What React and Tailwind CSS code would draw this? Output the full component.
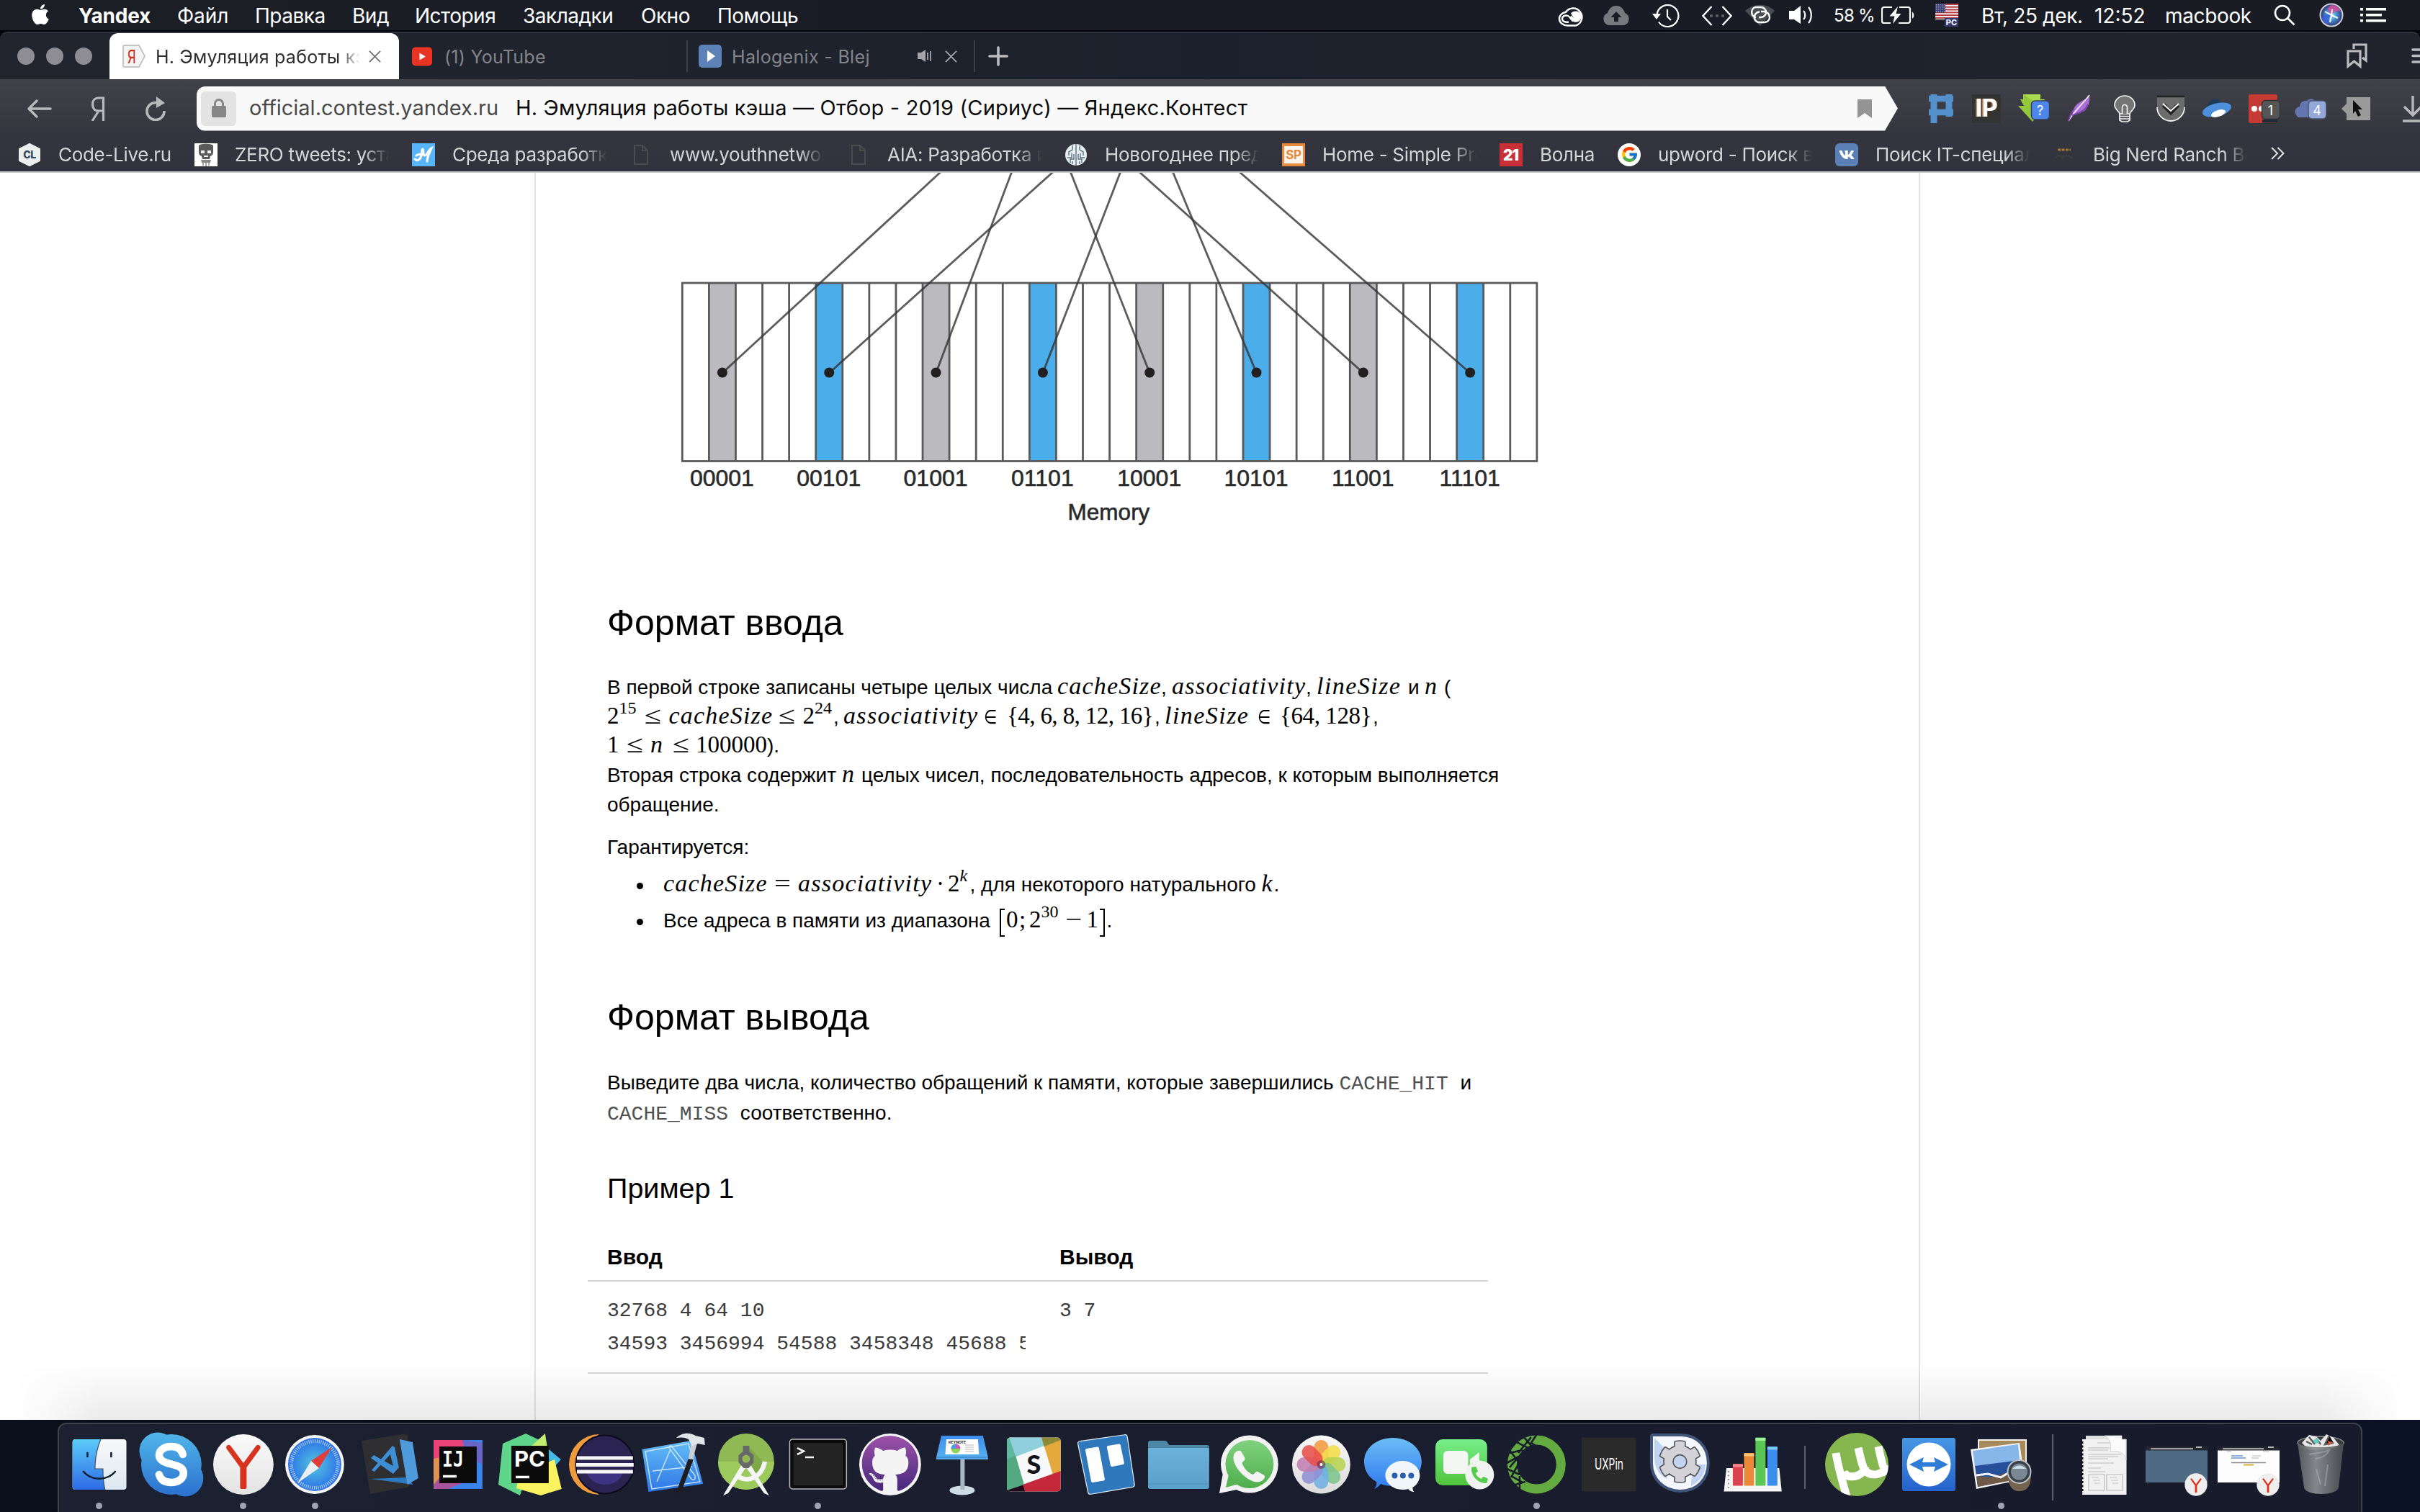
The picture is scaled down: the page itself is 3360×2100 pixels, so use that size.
import { FaApple, FaGithub, FaPhoneAlt, FaVk, FaCog } from "react-icons/fa";
import { FcGoogle } from "react-icons/fc";

/* ---------- macOS menu bar ---------- */

function MenuItem({ className, children }) {
  return <div className={"shrink-0 pt-px whitespace-nowrap " + className}>{children}</div>;
}

function Slot({ className, children }) {
  return <div className={"flex h-full shrink-0 items-center whitespace-nowrap " + (className || "")}>{children}</div>;
}

function MenuBar() {
  return (
    <div className="flex h-[44px] items-center border-b-2 border-[#03050d] bg-linear-to-r from-[#1b1e24] via-[#191c27] to-[#191c23] pl-[40px] text-[28px] leading-[44px] tracking-[-0.5px] text-white">
      <Slot className="w-[69px]">
        <FaApple className="-mt-[2px] size-[32px]" />
      </Slot>
      <MenuItem className="w-[137px] font-bold tracking-[-0.2px]">Yandex</MenuItem>
      <MenuItem className="w-[108px] tracking-[-0.1px]">Файл</MenuItem>
      <MenuItem className="w-[135px]">Правка</MenuItem>
      <MenuItem className="w-[87px]">Вид</MenuItem>
      <MenuItem className="w-[150px]">История</MenuItem>
      <MenuItem className="w-[164px]">Закладки</MenuItem>
      <MenuItem className="w-[106px]">Окно</MenuItem>
      <MenuItem className="w-[1167px]">Помощь</MenuItem>
      <Slot className="w-[61px] pt-[3px]">
        <svg viewBox="0 0 38 28" className="h-[28px] w-[38px]" fill="none" stroke="white" strokeWidth="2.400">
          <path d="M13.500 26.500a12 9.500 0 0 1-2.500-18.700A12.300 12.300 0 1 1 25 26.500Z" />
          <path d="M25 6.500a7.600 7.600 0 0 1 0 15.300c-4 0-6-3-8.500-6.300l2-3 4 4-4.500-6.800c1.500-2 4-3.200 7-3.200Z" fill="white" stroke="none" />
          <path d="M15 21.500c-5 1-9-1-9-4.500s4-5.500 8-4c2.500 1 4 5 7 7.500" />
        </svg>
      </Slot>
      <Slot className="w-[70px] pt-px">
        <svg viewBox="0 0 40 28" className="h-[28px] w-[40px]">
          <path d="M9 27a9 9 0 0 1-1-17C10 4 14 0 20 0s10 4 12 10a9 9 0 0 1-1 17Z" fill="#77797f" />
          <path d="m20 8 7.500 8H23v6h-6v-6h-4.500Z" fill="#191c24" />
        </svg>
      </Slot>
      <Slot className="w-[69px] pt-px">
        <svg viewBox="0 0 38 32" className="h-[32px] w-[38px]" fill="none" stroke="white" strokeWidth="2.200">
          <path d="M6.500 14A15 15 0 1 1 9 24.500" />
          <path d="M21 7v10l5 5" />
          <path d="M0 13h12l-6 8Z" fill="white" stroke="none" />
        </svg>
      </Slot>
      <Slot className="w-[60px] pt-px">
        <svg viewBox="0 0 42 28" className="h-[28px] w-[42px]" fill="none" stroke="white" strokeWidth="2.400">
          <path d="M13.500 1 1.500 14l12 13M28.500 1l12 13-12 13" />
          <g fill="#595b62" stroke="none">
            <circle cx="13" cy="14" r="2.200" />
            <circle cx="21" cy="14" r="2.200" />
            <circle cx="29" cy="14" r="2.200" />
          </g>
        </svg>
      </Slot>
      <Slot className="w-[61px]">
        <svg viewBox="0 0 42 30" className="h-[30px] w-[42px]" fill="none" stroke="white" strokeWidth="2.400">
          <path d="M0 9C12-2 30-2 41 9L20.500 30Z" fill="#4a4c53" stroke="none" />
          <path d="M15 18h-1a7.500 7.500 0 0 1 0-14h8a7 7 0 0 1 0 14h-3" />
          <path d="M22 10h4a8 8 0 0 1 8 8 7 7 0 0 1-7 7h-8a7 7 0 0 1-5-11c1-2 3-3 6-4" />
        </svg>
      </Slot>
      <Slot className="w-[62px]">
        <svg viewBox="0 0 34 26" className="h-[26px] w-[34px]" fill="none" stroke="white" strokeWidth="2.200">
          <path d="M0 7h7L16 0v25L7 19H0Z" fill="white" stroke="none" />
          <path d="M20 7c3 3 3 9 0 12M27 2c5 6 5 16 0 22" />
        </svg>
      </Slot>
      <MenuItem className="w-[66px] text-[24px] tracking-[-0.700px]">58 %</MenuItem>
      <Slot className="w-[75px]">
        <svg viewBox="0 0 46 26" className="h-[26px] w-[46px]" fill="none" stroke="white" strokeWidth="2.200">
          <path d="M15 2H4a3 3 0 0 0-3 3v16a3 3 0 0 0 3 3h9M25 2h12a3 3 0 0 1 3 3v16a3 3 0 0 1-3 3H24" />
          <path d="M23 1 11.500 14.500h7L16 25l11.500-14h-7Z" fill="white" stroke="none" />
          <path d="M43 8.500c3 1.500 3 8 0 9Z" fill="white" stroke="none" />
        </svg>
      </Slot>
      <Slot className="w-[64px]">
        <div className="relative h-[32px] w-[32px]">
          <svg viewBox="0 0 32 22" className="h-[22px] w-[32px]">
            <rect width="32" height="22" fill="#f3f3f5" />
            {[0, 1, 2, 3, 4, 5].map((i) => (
              <rect key={i} y={i * 3.8} width="32" height="1.900" fill="#b3363d" />
            ))}
            <rect width="14" height="12.500" fill="#3b3f78" />
            {[0, 1, 2, 3].map((r) =>
              [0, 1, 2, 3, 4].map((c) => <circle key={r + "-" + c} cx={1.5 + c * 2.7} cy={1.8 + r * 3} r="0.600" fill="#fff" />)
            )}
          </svg>
          <div className="absolute right-0 bottom-0 h-[12px] w-[19px] bg-[#363a72] text-center text-[11px] leading-[12px] font-bold tracking-normal">PC</div>
        </div>
      </Slot>
      <MenuItem className="w-[157px] tracking-[-0.350px]">Вт, 25 дек.</MenuItem>
      <MenuItem className="w-[98px] tracking-normal">12:52</MenuItem>
      <MenuItem className="w-[151px] tracking-[-0.350px]">macbook</MenuItem>
      <Slot className="w-[63px]">
        <svg viewBox="0 0 30 30" className="h-[30px] w-[30px]" fill="none" stroke="white" strokeWidth="2.600">
          <circle cx="12" cy="12" r="10" />
          <path d="m19 19 9.500 9.500" />
        </svg>
      </Slot>
      <Slot className="w-[57px]">
        <svg viewBox="0 0 34 34" className="size-[34px]">
          <defs>
            <radialGradient id="siri">
              <stop offset="0" stopColor="#dff6ff" />
              <stop offset="0.350" stopColor="#4aa7e0" />
              <stop offset="1" stopColor="#31306f" />
            </radialGradient>
          </defs>
          <circle cx="17" cy="17" r="15.500" fill="url(#siri)" stroke="#cfd0da" strokeWidth="2" />
          <path d="M17 17C10 10 11 4 19 3c6 1 10 6 11 9-6-2-10 1-13 5Z" fill="#d94f9c" opacity="0.850" />
          <path d="M17 17C9 15 5 18 4 22c2 5 6 7 9 8-1-5 0-9 4-13Z" fill="#3b62d8" opacity="0.900" />
          <path d="m17 17 9 4M17 17l-9-5M17 17l1-8M17 17l-2 10" stroke="white" strokeWidth="2" />
        </svg>
      </Slot>
      <Slot>
        <svg viewBox="0 0 36 20" className="h-[20px] w-[36px]" fill="white">
          <path d="M0 0h4v3.500H0ZM8 0h28v3.500H8ZM0 8h4v3.500H0ZM8 8h22v3.500H8ZM0 16h4v3.500H0ZM8 16h28v3.500H8Z" />
        </svg>
      </Slot>
    </div>
  );
}

/* ---------- browser chrome ---------- */

function Cross({ className }) {
  return (
    <svg viewBox="0 0 18 18" className={"size-[17px] shrink-0 " + className} fill="none" stroke="currentColor" strokeWidth="1.900">
      <path d="m1 1 16 16M17 1 1 17" />
    </svg>
  );
}

function TabBar() {
  return (
    <div className="flex h-[66px] items-center rounded-t-[10px] border-t-2 border-[#30333d] bg-linear-to-r from-[#22252e] via-[#1b212c] to-[#22242d] text-[25px] leading-[62px] tracking-[0.250px]">
      <div className="flex w-[152px] shrink-0 gap-[16px] pl-[24px]">
        <span className="size-[24px] rounded-full bg-[#8f8d94]" />
        <span className="size-[24px] rounded-full bg-[#8f8d94]" />
        <span className="size-[24px] rounded-full bg-[#8f8d94]" />
      </div>
      <div className="flex h-full w-[402px] shrink-0 items-center rounded-t-[12px] bg-white pl-[18px]">
        <svg viewBox="0 0 32 32" className="size-[32px] shrink-0">
          <path d="M3 1h20l8 15-8 15H3a2 2 0 0 1-2-2V3a2 2 0 0 1 2-2Z" fill="#f4f4f4" stroke="#c4c4c4" strokeWidth="2" />
          <text x="13" y="25.500" fontSize="26" textAnchor="middle" fill="#cf2a1f" textLength="12" lengthAdjust="spacingAndGlyphs" fontFamily="Inter">Я</text>
        </svg>
        <div className="ml-[14px] w-[290px] overflow-hidden pt-px whitespace-nowrap text-[#2d2d30] [mask-image:linear-gradient(to_right,black_88%,transparent_98%)]">Н. Эмуляция работы кэша</div>
        <Cross className="ml-[6px] text-[#6f6f6f]" />
      </div>
      <div className="flex h-full w-[399px] shrink-0 items-center pl-[18px] text-[#84858b]">
        <svg viewBox="0 0 28 26" className="h-[27px] w-[28px] shrink-0">
          <rect width="28" height="26" rx="5" fill="#e93323" />
          <path d="m10.500 8 8.500 5-8.500 5Z" fill="white" />
        </svg>
        <span className="ml-[17px] pt-px">(1) YouTube</span>
      </div>
      <div className="h-[44px] w-[2px] shrink-0 bg-[#3c3f47]" />
      <div className="flex h-full w-[397px] shrink-0 items-center pl-[15px] text-[#84858b]">
        <svg viewBox="0 0 32 32" className="size-[32px] shrink-0">
          <rect width="32" height="32" rx="5" fill="#5d82b7" />
          <path d="m12 8 11 8-11 8Z" fill="white" />
        </svg>
        <span className="ml-[14px] w-[258px] pt-px tracking-[0.320px]">Halogenix - Blej</span>
        <svg viewBox="0 0 20 18" className="h-[18px] w-[20px] shrink-0" fill="none" stroke="#a5a5a9" strokeWidth="1.800">
          <path d="M0 4h5l6-4v17l-6-4H0Z" fill="#a5a5a9" stroke="none" />
          <path d="M14 4v10M18 2v14" />
        </svg>
        <Cross className="ml-[18px] text-[#a9a9ad]" />
      </div>
      <div className="h-[44px] w-[2px] shrink-0 bg-[#3c3f47]" />
      <svg viewBox="0 0 28 28" className="ml-[18px] size-[28px] shrink-0" stroke="#bcbcc0" strokeWidth="3.600" strokeLinecap="round">
        <path d="M2 14h24M14 2v24" />
      </svg>
      <div className="grow" />
      <svg viewBox="0 0 30 36" className="h-[36px] w-[30px] shrink-0" fill="none" stroke="#bcbcc0" strokeWidth="3.200">
        <path d="M2 11h17v21l-8.500-7L2 32Z" />
        <path d="M10 8V2h17v22l-5-4" />
      </svg>
      <svg viewBox="0 0 12 22" className="ml-[60px] h-[22px] w-[12px] shrink-0" stroke="#bcbcc0" strokeWidth="3.600" strokeLinecap="round">
        <path d="M2 2h12M2 10.500h12M2 19h12" />
      </svg>
    </div>
  );
}

function Toolbar() {
  return (
    <div className="flex h-[81px] items-center pl-[38px] text-[#b9b9bd]">
      <Slot className="w-[88px]">
        <svg viewBox="0 0 34 26" className="h-[26px] w-[34px]" fill="none" stroke="currentColor" strokeWidth="3.400" strokeLinecap="round" strokeLinejoin="round">
          <path d="M32 13H3M13 2 2 13l11 11" />
        </svg>
      </Slot>
      <Slot className="w-[74px]">
        <svg viewBox="0 0 20 34" className="h-[34px] w-[20px]" fill="none" stroke="currentColor" strokeWidth="3.200">
          <path d="M17.500 34V2H11C5.500 2 2.500 6 2.500 11s3 9 8.500 9h6.500M11 20 2 34" />
        </svg>
      </Slot>
      <Slot className="w-[73px]">
        <svg viewBox="0 0 32 34" className="h-[34px] w-[32px]" fill="none" stroke="currentColor" strokeWidth="3.600">
          <path d="M18 8.500h-2A12 12 0 1 0 28 20" />
          <path d="m17 0 12 9-12 7Z" fill="currentColor" stroke="none" />
        </svg>
      </Slot>
      <div className="flex h-[62px] w-[2362px] shrink-0 items-center rounded-l-[12px] bg-[#f9f9f9] pl-[6px] [clip-path:polygon(0_0,calc(100%-18px)_0,100%_50%,calc(100%-18px)_100%,0_100%)]">
        <div className="flex h-[48px] w-[49px] shrink-0 items-center justify-center rounded-[6px] bg-[#e3e3e3]">
          <svg viewBox="0 0 20 27" className="h-[27px] w-[20px]">
            <rect y="10" width="20" height="16" rx="2" fill="#868686" />
            <path d="M4.500 11V7a5.500 5.500 0 0 1 11 0v4" fill="none" stroke="#868686" strokeWidth="3" />
          </svg>
        </div>
        <span className="ml-[18px] w-[370px] shrink-0 pb-[2px] text-[29px] text-[#494949]">official.contest.yandex.ru</span>
        <span className="grow pb-[2px] text-[29px] tracking-[0.180px] whitespace-nowrap text-[#0b0b0b]">Н. Эмуляция работы кэша — Отбор - 2019 (Сириус) — Яндекс.Контест</span>
        <svg viewBox="0 0 20 26" className="mr-[36px] h-[26px] w-[20px]">
          <path d="M0 0h20v26l-10-7-10 7Z" fill="#949494" />
        </svg>
      </div>
      <Slot className="ml-[43px] w-[60px]">
        <svg viewBox="0 0 34 40" className="h-[40px] w-[34px]" fill="none" stroke="#5390cc">
          <path d="M7 0v40M28 0v31" strokeWidth="9" />
          <path d="M0 6h34M0 25h34" strokeWidth="8.500" />
        </svg>
      </Slot>
      <Slot className="w-[64px]">
        <div className="flex size-[40px] items-center justify-center bg-[#333333] pb-px font-['Inter'] text-[34px] leading-none font-bold tracking-tight text-white [text-shadow:-2px_0_#d18a4a]">IP</div>
      </Slot>
      <Slot className="w-[69px]">
        <svg viewBox="0 0 44 40" className="h-[40px] w-[44px]">
          <path d="M7 0h24v7h6l-5 9h6L20 38 0 16h8L3 7h4Z" fill="#93c83d" />
          <path d="M7 0h24v7h6l-3 4-13-2Z" fill="#a9d94f" />
          <rect x="18.500" y="9" width="25" height="26" rx="5" fill="#4f86ec" stroke="#33415f" strokeWidth="1.500" />
          <text x="30.500" y="29" fontSize="18" textAnchor="middle" fill="white" fontFamily="Inter">?</text>
        </svg>
      </Slot>
      <Slot className="w-[64px]">
        <svg viewBox="0 0 32 40" className="h-[40px] w-[32px]">
          <path d="M30 1c1 8-1 17-7 22-6 4-12 4-17 6 1-6 2-12 9-17C20 8 27 7 30 1Z" fill="#a96fd2" />
          <path d="M30 1C22 12 10 22 1 37" fill="none" stroke="#efe4f8" strokeWidth="1.800" />
          <path d="M6 29c8-3 17-4 22-15M9 20c-4 5-6 9-8 17" fill="none" stroke="#7c3fb3" strokeWidth="2" />
        </svg>
      </Slot>
      <Slot className="w-[59px]">
        <svg viewBox="0 0 30 38" className="h-[38px] w-[30px]" fill="#757575" stroke="#f2f2f2" strokeWidth="1.700">
          <path d="M8 26h14v9l-3 2h-8l-3-2Z" fill="#4a4a4d" />
          <path d="M8 26c0-3-7-6-7-12a14 13 0 0 1 28 0c0 6-7 9-7 12Z" />
          <path d="M11.500 26V17a3.500 3.500 0 0 1 7 0v9M8 29.500h14M8 33h14" />
        </svg>
      </Slot>
      <Slot className="w-[64px]">
        <svg viewBox="0 0 40 38" className="h-[38px] w-[40px]">
          <path d="M1 1h38v16a19 19 0 0 1-38 0Z" fill="#6c6c6c" />
          <path d="M1 17a19 19 0 0 0 38 0" fill="none" stroke="#f0f0f0" strokeWidth="1.800" />
          <path d="M1 2h38" stroke="#222226" strokeWidth="2.500" />
          <path d="m10 14 10 10 10-10" fill="none" stroke="#232323" strokeWidth="6" />
          <path d="m9 12 11 10 11-10" fill="none" stroke="#ffffff" strokeWidth="2" />
        </svg>
      </Slot>
      <Slot className="w-[64px]">
        <svg viewBox="0 0 40 34" className="h-[34px] w-[40px]">
          <path d="M7 13C10 3 18 1 24 6l5 6-14 6Z" fill="#213a58" />
          <ellipse cx="20" cy="18.500" rx="20.500" ry="9" transform="rotate(-14 20 18.500)" fill="#4c8fdd" />
          <ellipse cx="22" cy="23.500" rx="10.500" ry="4.500" transform="rotate(-18 22 23.500)" fill="white" />
        </svg>
      </Slot>
      <Slot className="w-[64px]">
        <svg viewBox="0 0 44 40" className="h-[40px] w-[44px]">
          <rect width="40" height="40" rx="3" fill="#c33b32" />
          <circle cx="8" cy="20" r="4" fill="white" />
          <circle cx="18" cy="20" r="4" fill="white" />
          <rect x="19" y="35" width="21" height="4.500" fill="#1e2c38" />
          <rect x="18.500" y="8.500" width="25" height="26" rx="5" fill="#555555" stroke="#33333a" strokeWidth="1.500" />
          <text x="30.500" y="29" fontSize="18" textAnchor="middle" fill="white" fontFamily="Inter">1</text>
        </svg>
      </Slot>
      <Slot className="w-[65px]">
        <svg viewBox="0 0 44 40" className="h-[40px] w-[44px]">
          <path d="M5 32C-2 27 0 18 7 17c0-5 5-9 10-8 3-3 8-3 10-1v24Z" fill="#6377ae" />
          <rect x="19" y="9" width="25" height="25" rx="5" fill="#93a8d8" stroke="#4b5470" strokeWidth="1.500" />
          <text x="31" y="29" fontSize="18" textAnchor="middle" fill="white" fontFamily="Inter">4</text>
        </svg>
      </Slot>
      <Slot className="w-[85px]">
        <svg viewBox="0 0 40 32" className="h-[32px] w-[40px]">
          <path d="M7 0h33v32H7v-9l-7-7 7-7Z" fill="#9a9a9a" />
          <path d="m16 4 13 13h-6l4 8-4 2-4-8-3 4Z" fill="#111111" />
        </svg>
      </Slot>
      <Slot>
        <svg viewBox="0 0 24 38" className="h-[38px] w-[24px]" fill="none" stroke="currentColor" strokeWidth="3.400">
          <path d="M14 1v27M2 16l12 12 12-12M0 36h26" />
        </svg>
      </Slot>
    </div>
  );
}

function DocGlyph() {
  return (
    <svg viewBox="0 0 32 32" className="size-[32px]" fill="none" stroke="#4c4c4f" strokeWidth="2">
      <path d="M7 3h11l7 7v19H7ZM18 3v7h7" />
    </svg>
  );
}

const bookmarks = [
  {
    w: "w-[245px]",
    t: "Code-Live.ru",
    icon: (
      <svg viewBox="0 0 32 32" className="size-[32px]">
        <path d="m16 1 14 7v16l-14 7L2 24V8Z" fill="#eceef0" stroke="#eceef0" strokeWidth="2" strokeLinejoin="round" />
        <text x="16" y="21" fontSize="14" fontWeight="800" textAnchor="middle" fill="#2f4a5c" fontFamily="Inter">CL</text>
      </svg>
    ),
  },
  {
    w: "w-[302px]",
    t: "ZERO tweets: устано",
    icon: (
      <svg viewBox="0 0 32 32" className="size-[32px]">
        <rect width="32" height="32" fill="white" />
        <path d="M6 8V3c3-3 17-3 20 0v9c0 4-2 5-4 6l-1 4H11l-1-4c-2-1-4-2-4-6Z" fill="#5a5a5a" />
        <path d="M9 10h5v4H9ZM18 10h5v4h-5ZM13 17h6v2h-6Z" fill="#f2f2f2" />
        <path d="M9 23h14l-1 4H10Z" fill="#888" />
        <path d="M12 27v4M16 27v5M20 27v4" stroke="#888" strokeWidth="1.500" />
      </svg>
    ),
  },
  {
    w: "w-[302px]",
    t: "Среда разработки",
    icon: (
      <svg viewBox="0 0 32 32" className="size-[32px]">
        <rect width="32" height="32" fill="#58b4fb" />
        <path d="M4 22c4 4 8 0 9-6s1-8 2-8 0 9 3 9 5-8 9-10c-2 5-6 12-6 18M6 17c3-2 6-2 8-1" fill="none" stroke="white" strokeWidth="3.200" strokeLinecap="round" />
      </svg>
    ),
  },
  { w: "w-[302px]", t: "www.youthnetwork.", icon: <DocGlyph /> },
  { w: "w-[302px]", t: "AIA: Разработка и", icon: <DocGlyph /> },
  {
    w: "w-[302px]",
    t: "Новогоднее предл",
    icon: (
      <svg viewBox="0 0 32 32" className="size-[32px]">
        <circle cx="16" cy="16" r="15" fill="#e8edf1" />
        <path d="M16 1v30M11 3v6l-5 3v5M4 20h6v-6M8 27v-5h5v-7M21 3v6l5 3v5M28 20h-6v-6M24 27v-5h-5v-7M11 25v4M21 25v4" fill="none" stroke="#5a7187" strokeWidth="1.400" />
      </svg>
    ),
  },
  {
    w: "w-[302px]",
    t: "Home - Simple Pro",
    icon: (
      <svg viewBox="0 0 32 32" className="size-[32px]">
        <rect width="32" height="32" fill="#e6883d" />
        <rect x="3" y="4" width="26" height="24" fill="#fbf5ee" />
        <text x="16" y="22" fontSize="17" fontWeight="700" textAnchor="middle" fill="#e6883d" fontFamily="Inter">SP</text>
      </svg>
    ),
  },
  {
    w: "w-[164px]",
    t: "Волна",
    icon: (
      <svg viewBox="0 0 32 32" className="size-[32px]">
        <rect width="32" height="32" fill="#c92f37" />
        <text x="15.500" y="23.500" fontSize="21" fontWeight="900" textAnchor="middle" fill="white" fontFamily="Inter" letterSpacing="-1">21</text>
      </svg>
    ),
  },
  {
    w: "w-[302px]",
    t: "upword - Поиск в G",
    icon: (
      <div className="flex size-[32px] items-center justify-center rounded-full bg-white">
        <FcGoogle className="size-[25px]" />
      </div>
    ),
  },
  {
    w: "w-[302px]",
    t: "Поиск IT-специал",
    icon: (
      <div className="flex size-[32px] items-center justify-center rounded-[6px] bg-[#5b80b5]">
        <FaVk className="size-[22px] text-white" />
      </div>
    ),
  },
  {
    w: "w-[303px]",
    t: "Big Nerd Ranch Bo",
    icon: (
      <svg viewBox="0 0 32 32" className="size-[32px]">
        <path d="M7 9h18" stroke="#a9792f" strokeWidth="3" strokeDasharray="4 1.500" />
        <path d="M4 21c2-5 8-5 9 0 2-5 9-5 15 0" fill="none" stroke="#3f3e3c" strokeWidth="2" />
      </svg>
    ),
  },
];

function BookmarksBar() {
  return (
    <div className="flex h-[47px] items-center pl-[25px] text-[26px] leading-[47px] tracking-[-0.300px] text-[#d5d5d8]">
      {bookmarks.map((b) => (
        <div key={b.t} className={"flex shrink-0 items-center " + b.w}>
          <div className="w-[56px] shrink-0">{b.icon}</div>
          <div className="w-[214px] overflow-hidden whitespace-nowrap [mask-image:linear-gradient(to_right,black_84%,transparent_100%)]">{b.t}</div>
        </div>
      ))}
      <svg viewBox="0 0 19 18" className="h-[18px] w-[19px] shrink-0 -translate-y-[2px]" fill="none" stroke="#e2e2e4" strokeWidth="2">
        <path d="m1 1 8 8-8 8M9.500 1l8 8-8 8" />
      </svg>
    </div>
  );
}

/* ---------- article ---------- */

const dots = [
  { label: "00001", top: 1307 },
  { label: "00101", top: 1463 },
  { label: "01001", top: 1405 },
  { label: "01101", top: 1556 },
  { label: "10001", top: 1486 },
  { label: "10101", top: 1628 },
  { label: "11001", top: 1581 },
  { label: "11101", top: 1720 },
];

function MemoryDiagram() {
  const left = 947.3;
  const cell = 37.08;
  const y0 = 153;
  const y1 = 400.5;
  return (
    <svg viewBox="843 0 1400 502" className="h-[502px] w-[1400px]" fontFamily="Liberation Sans" fill="#2a2a2a">
      {dots.map((d, i) => (
        <rect key={d.label} x={left + cell * (1 + i * 4)} y={y0} width={cell} height={y1 - y0} fill={i % 2 ? "#4bade9" : "#bbbbbf"} />
      ))}
      <g stroke="#5a5a5a" strokeWidth="2.800" fill="none">
        <rect x={left} y={y0} width={cell * 32} height={y1 - y0} />
        {Array.from({ length: 31 }, (_, i) => (
          <path key={i} d={`M${left + cell * (i + 1)} ${y0}V${y1}`} />
        ))}
      </g>
      {dots.map((d, i) => {
        const cx = left + cell * (1.5 + i * 4);
        return (
          <g key={d.label}>
            <path d={`M${d.top} -2 ${cx} 278`} stroke="#333333" strokeOpacity="0.800" strokeWidth="2.800" />
            <circle cx={cx} cy="277.500" r="7" fill="#221f20" />
            <text x={cx - 0.5} y="435" fontSize="32" textAnchor="middle" stroke="#2a2a2a" strokeWidth="0.600">{d.label}</text>
          </g>
        );
      })}
      <text x="1539.500" y="481.500" fontSize="31.500" textAnchor="middle" stroke="#2a2a2a" strokeWidth="0.600">Memory</text>
    </svg>
  );
}

function M({ className, children }) {
  return <span className={"shrink-0 font-['Liberation_Serif'] leading-none whitespace-nowrap " + (className || "")}>{children}</span>;
}

function Var({ className, children }) {
  return <M className={"text-[34px] italic " + (className || "")}>{children}</M>;
}

function Num({ className, children }) {
  return <M className={"text-[33px] " + (className || "")}>{children}</M>;
}

function Le({ className }) {
  return (
    <M className={"text-[34px] " + className}>
      <span className="inline-block origin-left scale-x-125">≤</span>
    </M>
  );
}

function In({ className }) {
  return (
    <span className={"shrink-0 font-['DejaVu_Sans'] text-[28px] leading-none " + className}>
      <span className="inline-block origin-bottom-left scale-x-75 scale-y-95">∈</span>
    </span>
  );
}

function Sup({ className, children }) {
  return <span className={"relative -top-[14px] shrink-0 font-['Liberation_Serif'] text-[24px] leading-none whitespace-nowrap " + (className || "")}>{children}</span>;
}

function Line({ className, children }) {
  return <div className={"flex h-[40.700px] items-baseline whitespace-nowrap " + (className || "")}>{children}</div>;
}

function Bullet() {
  return (
    <span className="w-[78px] pl-[41px]">
      <span className="inline-block size-[9px] -translate-y-[3px] rounded-full bg-black" />
    </span>
  );
}

function InputFormat() {
  return (
    <div className="text-[28px] leading-[40.700px]">
      <Line>
        <span className="w-[625px]">В первой строке записаны четыре целых числа</span>
        <Var className="w-[144px] tracking-[1.200px]">cacheSize</Var>
        <span className="w-[15px]">,</span>
        <Var className="w-[186px] tracking-[1.250px]">associativity</Var>
        <span className="w-[15px]">,</span>
        <Var className="w-[127px] tracking-[1.450px]">lineSize</Var>
        <span className="w-[23px]">и</span>
        <Var className="w-[27px]">n</Var>
        <span>(</span>
      </Line>
      <Line>
        <Num>2</Num>
        <Sup className="w-[35px]">15</Sup>
        <Le className="w-[34px]" />
        <Var className="w-[152px] tracking-[1.200px]">cacheSize</Var>
        <Le className="w-[34px]" />
        <Num>2</Num>
        <Sup className="w-[26px]">24</Sup>
        <span className="w-[14px]">,</span>
        <Var className="w-[195px] tracking-[1.350px]">associativity</Var>
        <In className="w-[32px]" />
        <Num className="w-[205px] tracking-[-0.600px]">{"{4, 6, 8, 12, 16}"}</Num>
        <span className="w-[14px]">,</span>
        <Var className="w-[129px] tracking-[1.450px]">lineSize</Var>
        <In className="w-[31px]" />
        <Num className="w-[129px] tracking-[-0.400px]">{"{64, 128}"}</Num>
        <span>,</span>
      </Line>
      <Line>
        <Num className="w-[27px]">1</Num>
        <Le className="w-[33px]" />
        <Var className="w-[31px]">n</Var>
        <Le className="w-[32px]" />
        <Num>100000</Num>
        <span>).</span>
      </Line>
      <Line>
        <span className="w-[326px]">Вторая строка содержит</span>
        <Var className="w-[27px]">n</Var>
        <span>целых чисел, последовательность адресов, к которым выполняется</span>
      </Line>
      <Line>обращение.</Line>
      <Line className="mt-[19px]">Гарантируется:</Line>
      <Line className="mt-[11px]">
        <Bullet />
        <Var className="w-[154px] tracking-[1.200px]">cacheSize</Var>
        <M className="w-[33px] text-[34px]">
          <span className="inline-block origin-left scale-x-120">=</span>
        </M>
        <Var className="w-[192px] tracking-[1.250px]">associativity</Var>
        <Num className="w-[16px]">·</Num>
        <Num>2</Num>
        <Sup className="w-[14px] italic">k</Sup>
        <span className="w-[405px]">, для некоторого натурального</span>
        <Var className="w-[17px]">k</Var>
        <span>.</span>
      </Line>
      <Line className="mt-[9px]">
        <Bullet />
        <span className="w-[467px]">Все адреса в памяти из диапазона</span>
        <span className="h-[39px] w-[7px] translate-y-[3px] self-start border-2 border-r-0 border-black" />
        <Num className="ml-[2px] w-[18px]">0</Num>
        <Num className="w-[14px]">;</Num>
        <Num>2</Num>
        <Sup className="w-[33px]">30</Sup>
        <M className="w-[30px] text-[34px]">
          <span className="inline-block origin-left scale-x-120">−</span>
        </M>
        <Num className="w-[18px]">1</Num>
        <span className="h-[39px] w-[7px] translate-y-[3px] self-start border-2 border-l-0 border-black" />
        <span className="ml-[3px]">.</span>
      </Line>
    </div>
  );
}

function Article() {
  return (
    <main className="h-[1734px] overflow-hidden border-t-2 border-[#c9c9cd] bg-white font-['Liberation_Sans'] text-black">
      <div className="ml-[742px] h-full w-[1924px] border-x-2 border-[#e3e3e3] pl-[99px]">
        <MemoryDiagram />
        <h2 className="mt-[93px] text-[50px] leading-[60px]">Формат ввода</h2>
        <div className="mt-[40px]">
          <InputFormat />
        </div>
        <h2 className="mt-[83px] text-[50px] leading-[60px]">Формат вывода</h2>
        <p className="mt-[40px] w-[1240px] text-[28px] leading-[42px]">
          Выведите два числа, количество обращений к памяти, которые завершились{" "}
          <span className="mr-[9px] font-['Liberation_Mono'] leading-none text-[#505050]">CACHE_HIT</span> и<br />
          <span className="mr-[9px] font-['Liberation_Mono'] leading-none text-[#505050]">CACHE_MISS</span> соответственно.
        </p>
        <h3 className="mt-[58px] text-[39.500px] leading-[50px]">Пример 1</h3>
        <div className="mt-[51px] -ml-[27px] w-[1250px]">
          <div className="flex border-b-2 border-[#d6d6d6] pb-[12px] pl-[27px] text-[30px] leading-[40px] font-bold">
            <div className="w-[628px]">Ввод</div>
            <div>Вывод</div>
          </div>
          <div className="flex border-b-2 border-[#d6d6d6] pt-[18px] pb-[16px] pl-[27px] font-['Liberation_Mono'] text-[28px] leading-[46px] text-[#3a3a3a]">
            <div className="mr-[47px] w-[581px] overflow-hidden whitespace-nowrap">
              <div>32768 4 64 10</div>
              <div>34593 3456994 54588 3458348 45688 58</div>
            </div>
            <div>3 7</div>
          </div>
        </div>
      </div>
    </main>
  );
}

/* ---------- dock ---------- */

function YLetter() {
  return <path d="M27 24c2-2 4-2 6 1l17 23 17-23c2-3 4-3 6-1 1.500 2 1 3-1 6L54.500 54v28a2 2 0 0 1-2 2h-5a2 2 0 0 1-2-2V54L28 30c-2-3-2.500-4-1-6Z" fill="#d8331f" />;
}

function YandexBadge() {
  return (
    <g transform="translate(61 62) scale(0.320)">
      <circle cx="50" cy="50" r="49" fill="#eeeeee" />
      <YLetter />
    </g>
  );
}

function Grad({ id, a, b }) {
  return (
    <linearGradient id={id} x1="0" y1="0" x2="0" y2="1">
      <stop offset="0" stopColor={a} />
      <stop offset="1" stopColor={b} />
    </linearGradient>
  );
}

const petals = ["#f19a3e", "#f5dc4a", "#b9d150", "#7dc48c", "#6fb1e4", "#8f8fd6", "#c07fb4", "#e8504a"];

const apps = [
  {
    n: "finder",
    on: true,
    g: (
      <>
        <Grad id="fd" a="#5ccbfa" b="#2f6be6" />
        <Grad id="fw" a="#f8f8f8" b="#dde7f2" />
        <rect x="12.700" y="15" width="75" height="70" rx="4" fill="url(#fw)" />
        <path d="M16.700 15H52c-5 12-8 27-8 41h11c0 12 1 21 3 29H16.700a4 4 0 0 1-4-4V19a4 4 0 0 1 4-4Z" fill="url(#fd)" />
        <path d="M52 15c-5 12-8 27-8 41h11c0 12 1 21 3 29" fill="none" stroke="#3a5068" strokeWidth="1.200" />
        <path d="M33.500 34v5M66.500 34v5M28 60c11 13 33 13 44 0" fill="none" stroke="#10202f" strokeWidth="2.600" strokeLinecap="round" />
      </>
    ),
  },
  {
    n: "skype",
    g: (
      <>
        <linearGradient id="sk" gradientUnits="userSpaceOnUse" x1="0" y1="5" x2="0" y2="95">
          <stop offset="0" stopColor="#51b7ea" />
          <stop offset="1" stopColor="#2b6fce" />
        </linearGradient>
        <g fill="url(#sk)">
          <circle cx="50" cy="50" r="42" />
          <circle cx="31" cy="31" r="25.500" />
          <circle cx="69" cy="69" r="25.500" />
        </g>
        <path d="M66 36c-2-8-8-11-16-11-10 0-17 5-17 12 0 16 34 9 34 25 0 8-8 13-17 13-10 0-15-4-17-11" fill="none" stroke="white" strokeWidth="10.500" strokeLinecap="round" />
      </>
    ),
  },
  {
    n: "yandex",
    on: true,
    g: (
      <>
        <Grad id="yb" a="#fafafa" b="#e3e3e3" />
        <circle cx="50" cy="50" r="42" fill="url(#yb)" />
        <YLetter />
      </>
    ),
  },
  {
    n: "safari",
    on: true,
    g: (
      <>
        <radialGradient id="sf">
          <stop offset="0" stopColor="#55c6e0" />
          <stop offset="1" stopColor="#2a6fe8" />
        </radialGradient>
        <circle cx="50" cy="50" r="41" fill="#f4f4f4" />
        <circle cx="50" cy="50" r="37" fill="url(#sf)" />
        <circle cx="50" cy="50" r="32.500" fill="none" stroke="#cfe8fb" strokeWidth="5" strokeDasharray="0.900 1.936" />
        <path d="m74 26-18 29-11-10Z" fill="#e23d37" />
        <path d="m26 76 19-31 11 10Z" fill="#e9eef1" />
      </>
    ),
  },
  {
    n: "vscode",
    g: (
      <>
        <path d="m15 17 60-9.500 4 2 6 66-6 6L27 91Z" fill="#2f2f31" />
        <path d="m28 70 49-2 10 10Z" fill="#2e78bd" />
        <path d="m68 15 18 4 8 50-15 9-2-10Z" fill="#4f9bdb" />
        <path d="M61 26 67 54l-8 9-31-22 4-4 27 15-4-16-22 24-4-2 29-34Z" fill="#3d8ed4" />
      </>
    ),
  },
  {
    n: "intellij",
    g: (
      <>
        <rect x="15" y="16" width="68" height="68" fill="#3b84ec" />
        <path d="M15 16h40l6 8-38 30-8 2Z" fill="#ea4378" />
        <path d="m15 42 20-4v30l-20 12Z" fill="#e0934f" />
        <path d="m55 16 28 4v30L60 40Z" fill="#6a66c8" />
        <path d="m15 78 12-14 28 12-20 8H15Z" fill="#a6559c" />
        <rect x="23" y="25" width="52" height="51" fill="#0b0b0b" />
        <text x="27" y="53" fontSize="31" fontWeight="700" fill="white" fontFamily="DejaVu Sans Mono" textLength="30" lengthAdjust="spacingAndGlyphs">IJ</text>
        <path d="M28 66.500h19" stroke="white" strokeWidth="3.500" />
      </>
    ),
  },
  {
    n: "pycharm",
    g: (
      <>
        <path d="m11 21 32-14 19 9-27 77L5 78Z" fill="#5fd58c" />
        <path d="M70 7 49 26h24Z" fill="#c3ec72" />
        <path d="m74 28 18 15-15 17Z" fill="#45b9e6" />
        <path d="m83 43 10 41-29 9-34-10 4-20Z" fill="#fbf25f" />
        <rect x="23" y="24" width="52" height="52" fill="#0b0b0b" />
        <text x="27" y="53" fontSize="30" fontWeight="700" fill="white" fontFamily="Inter" textLength="43" lengthAdjust="spacingAndGlyphs">PC</text>
        <path d="M29 67.500h19" stroke="white" strokeWidth="3.500" />
      </>
    ),
  },
  {
    n: "eclipse",
    g: (
      <>
        <path d="M45 8a42 42 0 0 0 0 84A50 50 0 0 1 45 8Z" fill="#ef9a3c" />
        <circle cx="53" cy="50" r="40.500" fill="#2b2351" stroke="#0c0a1c" strokeWidth="2" />
        <path d="M28 62a26 22 0 0 0 50 0Z" fill="#3d3382" />
        <path d="M14 41h78M13 50.500h80M14 60h78" stroke="#f6f6f8" strokeWidth="5" />
      </>
    ),
  },
  {
    n: "xcode",
    g: (
      <>
        <Grad id="xc" a="#63bdf6" b="#2f77e6" />
        <path d="m5.500 29 68-12 17 60-76 11Z" fill="url(#xc)" />
        <path d="m10 32 60-11 16 53-67 10ZM20 59l55-6M26 74l19-45M44 28l30 42c4 3 6 1 5-5L46 24c-3 0-4 2-2 4Z" fill="none" stroke="#cbe6fb" strokeWidth="1.400" />
        <path d="m70 42 7 1-17 45c-3 2-6 1-6-2Z" fill="#1d1d1f" />
        <path d="m74 20 8 1-6 22-6-1Z" fill="#c9d0d4" />
        <path d="M53 13c8-8 20-8 27-3l12 3 1 10-10-2-8 3-5-9c-5-3-11-3-17-2Z" fill="#dfe5e8" />
      </>
    ),
  },
  {
    n: "android-studio",
    g: (
      <>
        <circle cx="50" cy="46" r="39" fill="#8fb955" />
        <path d="M11 46a39 39 0 0 0 78 0Z" fill="#9dca5c" />
        <path d="m55 26 20 22-15 24-10-24Z" fill="#7fa848" />
        <path d="M36 65c16 12 36 3 40-19" fill="none" stroke="#f5f5f5" strokeWidth="6.500" />
        <path d="M44 50 18 93l7-3 25-36 25 36 7 3-26-43Z" fill="#f5f5f5" />
        <path d="M45.500 24h9v8l6 5v10l-7 8h-7l-7-8V37l6-5Z" fill="#686868" />
        <circle cx="50" cy="42" r="5.500" fill="#8fb955" />
      </>
    ),
  },
  {
    n: "terminal",
    on: true,
    g: (
      <>
        <rect x="10.500" y="15" width="79" height="69" rx="4" fill="#0b0b0b" stroke="#b9bcc0" strokeWidth="1.500" />
        <rect x="15.500" y="20" width="69" height="59" fill="#242424" />
        <path d="m21 27 9 4.500-9 4.500M32 40h12" fill="none" stroke="#f3f3f3" strokeWidth="2.600" />
      </>
    ),
  },
  {
    n: "github",
    g: (
      <>
        <Grad id="gh" a="#9b52a8" b="#46287c" />
        <circle cx="50" cy="50" r="43" fill="#f4f4f4" />
        <FaGithub x="9.500" y="9" size={81} fill="url(#gh)" />
      </>
    ),
  },
  {
    n: "keynote",
    g: (
      <>
        <ellipse cx="50" cy="86" rx="17.500" ry="6.500" fill="#cfdbe4" />
        <rect x="47.500" y="43" width="6" height="42" fill="#a9b7c4" />
        <Grad id="kn" a="#3c8cec" b="#5ab4f2" />
        <path d="M21 10h58l7 30v3H14v-3Z" fill="url(#kn)" />
        <path d="M14 40h72" stroke="#2d6fb8" strokeWidth="1" />
        <path d="M28 15h44l1.500 21h-47Z" fill="white" />
        <text x="31" y="20.500" fontSize="5" fontWeight="700" fill="#222" fontFamily="Inter">KEYNOTE</text>
        <circle cx="41" cy="28" r="6.500" fill="#8ed25a" />
        <path d="M41 28v-6.500a6.500 6.500 0 0 0-6.500 6.500Z" fill="#39a3ea" />
        <path d="M41 28v-6.500a6.500 6.500 0 0 1 6.500 6.500Z" fill="#d455b8" />
        <path d="M54 23h12M54 26h12M54 29h12M54 32h12" stroke="#b5b5b5" strokeWidth="1" />
      </>
    ),
  },
  {
    n: "slack",
    g: (
      <>
        <clipPath id="sl">
          <rect x="13" y="12.500" width="75" height="75" rx="5" />
        </clipPath>
        <g clipPath="url(#sl)">
          <rect x="13" y="12" width="75" height="76" fill="#f7f9fa" />
          <path d="M13 12h48l4 12-52 20Z" fill="#8fd0dc" />
          <path d="M61 12h27v7L65 26Z" fill="#8c8a35" />
          <path d="m65 25 23-9v44l-11 4Z" fill="#e4a93c" />
          <path d="m35 78 53-19v30H39Z" fill="#c5283a" />
          <path d="m13 85 22-8 4 12H13Z" fill="#200a1c" />
          <path d="m13 40 12-3 12 41-24 8Z" fill="#54a983" />
          <path d="M13 12h3l9 26-12 5Z" fill="#5fb89f" />
        </g>
        <text x="50.500" y="63" fontSize="36" fontWeight="900" textAnchor="middle" fill="#14141a" fontFamily="Lato">S</text>
      </>
    ),
  },
  {
    n: "trello",
    g: (
      <>
        <path d="m15 21 62-9 10 66-58 10Z" fill="#2f78bb" stroke="#dcebf5" strokeWidth="8" strokeLinejoin="round" />
        <path d="m15 21 62-9 10 66-58 10Z" fill="#2f78bb" stroke="#2f78bb" strokeWidth="5.500" strokeLinejoin="round" />
        <path d="m24 30 15-2.500 8 43-15 2.500ZM54 26l15-2.500L74 48l-15 3Z" fill="white" stroke="white" strokeWidth="4" strokeLinejoin="round" />
      </>
    ),
  },
  {
    n: "folder",
    g: (
      <>
        <path d="M9 20a3 3 0 0 1 3-3h21c3 0 4 6 6 6h52a3 3 0 0 1 3 3v20H9Z" fill="#4c87a6" />
        <Grad id="fo" a="#6cb1d9" b="#5a9fca" />
        <rect x="9" y="27" width="85" height="57" rx="2.500" fill="url(#fo)" />
        <path d="M9 77h85" stroke="#4f90ba" strokeWidth="1" />
      </>
    ),
  },
  {
    n: "whatsapp",
    g: (
      <>
        <Grad id="wa" a="#80d27f" b="#4fae4c" />
        <circle cx="50" cy="49.500" r="40" fill="#f2f2f2" />
        <path d="m13 62-5 28 29-6Z" fill="#f2f2f2" />
        <circle cx="50" cy="49.500" r="33.500" fill="url(#wa)" />
        <path d="m21 64-4 18 18-5Z" fill="#56b353" />
        <path d="M29.500 34c3-3.500 7-4 9-2l5 9c1 3-3 5-4 7 3 8 8 13 15 16 3-1 4-5 7-4l9 5c2 3-1 7-4 8-6 3-15 1-25-8-9-8-18-22-12-31Z" fill="#f4f4f4" />
      </>
    ),
  },
  {
    n: "photos",
    g: (
      <>
        <Grad id="ph" a="#f7f7f7" b="#dcdcdc" />
        <circle cx="49.500" cy="50" r="40.500" fill="url(#ph)" />
        {petals.map((c, i) => (
          <rect key={c} x="39.500" y="16" width="20" height="33" rx="10" fill={c} opacity="0.880" transform={`rotate(${i * 45} 49.5 50)`} />
        ))}
        <circle cx="49.500" cy="50" r="6" fill="#5a2640" opacity="0.550" />
        <circle cx="49.500" cy="50" r="2" fill="white" />
      </>
    ),
  },
  {
    n: "messages",
    g: (
      <>
        <Grad id="ms" a="#6bbdf6" b="#2e79f0" />
        <path d="M50 13c22 0 40 14 40 33S72 80 50 80c-6 0-12-1-17-3-3 4-6 6-9 7 3-3 4-7 3-10C16 68 10 58 10 46c0-19 18-33 40-33Z" fill="url(#ms)" />
        <path d="M63.500 45c13 0 24 9 24 20 0 8-5 14-10 17 0 3 1 5 2 6-4 0-7-2-8-4-3 1-5 1-8 1-13 0-24-9-24-20s11-20 24-20Z" fill="#f1f6fb" />
        <g fill="#2a5fae">
          <circle cx="52.500" cy="65.500" r="4" />
          <circle cx="64" cy="65.500" r="4" />
          <circle cx="75.500" cy="65.500" r="4" />
        </g>
      </>
    ),
  },
  {
    n: "facetime",
    g: (
      <>
        <Grad id="ft" a="#78ee8a" b="#4ec43c" />
        <rect x="9" y="15" width="72" height="64" rx="10" fill="url(#ft)" />
        <rect x="20" y="31" width="34.500" height="32" rx="6" fill="#f4f6f4" />
        <path d="m57 43 13-10v26l-13-10Z" fill="#f4f6f4" />
        <circle cx="70.500" cy="64.500" r="20" fill="#f1f3f1" />
        <FaPhoneAlt x="59" y="53" size={23} color="#55cc4b" />
      </>
    ),
  },
  {
    n: "anaconda",
    on: true,
    g: (
      <>
        <circle cx="49.500" cy="50" r="34" fill="none" stroke="#63ab41" strokeWidth="13" />
        <path d="m50 8-8 12 10 6M32 12l12 14M22 19l16 8M42 12 24 34M12 34l18-4M12 30l12 16M8 48l18-10M12 54l12-14M8 56l18 8M14 68l10-18M14 66l16 9M26 86V66M20 78l14-4" stroke="#181d2c" strokeWidth="2.600" fill="none" />
      </>
    ),
  },
  {
    n: "uxpin",
    g: (
      <>
        <rect x="12" y="12.500" width="76" height="75" rx="1.500" fill="#2a2a2a" />
        <text x="50" y="57.500" fontSize="21" textAnchor="middle" fill="white" fontFamily="Inter" textLength="40" lengthAdjust="spacingAndGlyphs">UXPin</text>
      </>
    ),
  },
  {
    n: "preferences",
    g: (
      <>
        <path d="M11 9h39c22 0 38 16 38 39S72 87 49 87 9 70 9 48V11a2 2 0 0 1 2-2Z" fill="#f4f8fd" stroke="#3f5478" strokeWidth="4" />
        <path d="M13 13 40 40 30 70C16 62 13 50 13 40ZM84 50c0 14-8 24-20 30l2-30Z" fill="#a9c3ea" opacity="0.700" />
        <circle cx="48.500" cy="46" r="13" fill="#c3d4ef" />
        <FaCog x="18.500" y="16" size={60} color="#d2d2d7" stroke="#55565c" strokeWidth="14" />
      </>
    ),
  },
  {
    n: "numbers",
    g: (
      <>
        <path d="M14 55h73.500L91 87.500H10.500Z" fill="#f5f5f5" />
        <path d="M17 59v24" stroke="#999" strokeWidth="2" strokeDasharray="2 3.500" />
        <rect x="23" y="49" width="14" height="30.500" rx="1" fill="#dc4350" />
        <rect x="38.500" y="34" width="14" height="45.500" rx="1" fill="#ea8a38" />
        <rect x="54.500" y="12.500" width="14" height="67" rx="1" fill="#5ac655" />
        <rect x="71" y="25" width="14" height="54.500" rx="1" fill="#3c8eee" />
        <path d="M23 51.500h14" stroke="#f08a90" strokeWidth="4" />
        <path d="M38.500 36.500h14" stroke="#f7c36e" strokeWidth="4" />
        <path d="M54.500 15h14" stroke="#9ef09a" strokeWidth="4" />
        <path d="M71 27.500h14" stroke="#7ec9f8" strokeWidth="4" />
      </>
    ),
  },
];

const tools = [
  {
    n: "utorrent",
    g: (
      <>
        <clipPath id="ut">
          <circle cx="50" cy="50" r="44" />
        </clipPath>
        <circle cx="50" cy="50" r="44" fill="#86b650" />
        <path d="M21 34c3 20 9 39 16 64M52 27c4 18 6 27 10 32 5 5 13 6 18 4 6-3 12-3 18-9M32 60c3 8 12 8 20 5 6-3 9-7 10-12M80 25c3 14 6 30 10 35" clipPath="url(#ut)" fill="none" stroke="white" strokeWidth="11" />
      </>
    ),
  },
  {
    n: "teamviewer",
    g: (
      <>
        <Grad id="tv" a="#4797e4" b="#2462cc" />
        <rect x="13" y="13" width="74" height="74" rx="3" fill="url(#tv)" />
        <circle cx="50" cy="50" r="30.500" fill="white" />
        <path d="m23 50 20-10-2 7h18l-2-7 20 10-20 10 2-7H41l2 7Z" fill="#2f7bd8" />
      </>
    ),
  },
  {
    n: "preview",
    on: true,
    g: (
      <>
        <rect x="18" y="15" width="68" height="60" fill="#f2f0ea" />
        <rect x="20" y="17" width="64" height="56" fill="#a68a5c" />
        <path d="m8 29 68-9 7 50-67 14Z" fill="#f5f5f5" />
        <path d="m11 31 63-9 2 22-62 9Z" fill="#86b6ea" />
        <path d="m14 52 62-8 4 24-62 13Z" fill="#27509b" />
        <path d="m16 66 20 2 20-6 10 10-48 9Z" fill="#6f5a48" />
        <path d="m16 65 16-2 18 5 10-6" stroke="#eef4f8" strokeWidth="3" fill="none" />
        <path d="M60 62h32c0 16-4 25-16 25S60 78 60 62Z" fill="#75624f" />
        <circle cx="75.500" cy="60" r="16" fill="#3a4048" stroke="#b9c0c6" strokeWidth="2" />
        <circle cx="75.500" cy="60" r="11.500" fill="#7c8794" />
        <path d="M66 56c5-6 14-6 19 0Z" fill="#cfdbe6" />
      </>
    ),
  },
];

const recents = [
  {
    n: "document",
    g: (
      <>
        <path d="M24 10h50v6H24Z" fill="#dedede" />
        <path d="M19 15h61.500v77H19Z" fill="#f1f1f1" />
        <path d="M19 18v72" stroke="#111" strokeWidth="3" strokeDasharray="3 2.500" />
        <path d="M40 20h18M27 27h30M27 30h28M27 36h46M27 39h42M27 42h28M27 48h36M27 55h18M27 60h24" stroke="#bdbdbd" strokeWidth="1.200" />
        <path d="M28 64h22v22H28ZM53 64h22v22H53Z" fill="none" stroke="#bbb" strokeWidth="1.200" />
        <path d="M32 68h10M34 72h10M36 76h8M57 68h10M59 72h10M61 76h8" stroke="#c4c4c4" strokeWidth="1" />
        <path d="M50 10c8 4 10 14 8 22 8-2 20 0 22 12V15h-6v-5Z" fill="#fbfbfb" stroke="#c9c9c9" strokeWidth="0.800" />
      </>
    ),
  },
  {
    n: "window-blue",
    g: (
      <>
        <rect x="7" y="25" width="86" height="50" fill="#4f6b84" />
        <rect x="7" y="25" width="86" height="5.500" fill="#23262f" />
        <path d="M14 28.200h59M77 26h8" stroke="#e5e5e5" strokeWidth="1.600" />
        <YandexBadge />
      </>
    ),
  },
  {
    n: "window-white",
    g: (
      <>
        <rect x="7" y="25" width="86" height="50" fill="#fdfdfd" />
        <rect x="7" y="25" width="86" height="5.500" fill="#23262f" />
        <path d="M14 28.200h57M77 26h8" stroke="#e5e5e5" strokeWidth="1.600" />
        <path d="M26 38h16M26 41h20" stroke="#6a93cf" strokeWidth="1.400" />
        <path d="M55 38h12M54 41h10M20 32h6M70 32h8" stroke="#b5b5b5" strokeWidth="1" />
        <path d="M26 47.500h48" stroke="#8a8a8a" strokeWidth="1.600" />
        <path d="M43 50.500h14" stroke="#d9bb45" strokeWidth="2.200" />
        <YandexBadge />
      </>
    ),
  },
  {
    n: "trash",
    g: (
      <>
        <linearGradient id="tr">
          <stop offset="0" stopColor="#5b5f62" />
          <stop offset="0.400" stopColor="#8b8f92" />
          <stop offset="1" stopColor="#4a4d50" />
        </linearGradient>
        <ellipse cx="50" cy="20" rx="32" ry="9" fill="#3a3d40" stroke="#8f9396" strokeWidth="1.500" />
        <path d="m24 20 10-11 10 2 6 6 8-9 10 5 8 10-16 7H34Z" fill="#e6e6e6" />
        <path d="m34 12 8 10M44 14l6 8M62 10l-6 12 12-2M30 18l8 4" stroke="#5a5a5a" strokeWidth="2.500" />
        <path d="m40 16 6-2 2 6-6 1Z" fill="#5fd0c9" />
        <path d="m60 17 7 2-6 5Z" fill="#d9533a" />
        <path d="M18 20c8 8 56 8 64 0l-7 62c-2 12-46 12-48 0Z" fill="url(#tr)" opacity="0.930" />
        <path d="M34 36c10-2 18-2 28-6-4 8-12 12-20 12M44 56l6 22M60 50l-4 30" stroke="#b9bdbf" strokeWidth="2" opacity="0.450" fill="none" />
      </>
    ),
  },
];

function DockIcon({ app, className }) {
  return (
    <div className={"flex shrink-0 flex-col items-center " + className}>
      <svg viewBox="0 0 100 100" className="h-[100px] w-full overflow-visible">
        {app.g}
      </svg>
      {app.on && <span className="mt-[3px] size-[9px] rounded-full bg-[#a0a3b1]" />}
    </div>
  );
}

function Dock() {
  return (
    <div className="flex h-[128px] bg-linear-to-r from-[#0b101d] via-[#05070e] to-[#0b1226] pt-[4px] pl-[80px]">
      <div className="flex h-[140px] w-[3200px] shrink-0 rounded-t-[12px] border-2 border-b-0 border-[#3d414c] bg-linear-to-r from-[#1c2131] via-[#191d2d] to-[#171b2b] pt-[6px] pl-[6px]">
        {apps.map((a) => (
          <DockIcon key={a.n} app={a} className="w-[99.800px]" />
        ))}
        <div className="flex w-[45px] shrink-0 justify-center pt-[24px]">
          <div className="h-[60px] w-[2px] bg-[#5a5e69]" />
        </div>
        {tools.map((a) => (
          <DockIcon key={a.n} app={a} className="w-[100px]" />
        ))}
        <div className="flex w-[44px] shrink-0 justify-center pt-[8px]">
          <div className="h-[92px] w-[2px] bg-[#5a5e69]" />
        </div>
        {recents.map((a) => (
          <DockIcon key={a.n} app={a} className="w-[100px]" />
        ))}
      </div>
    </div>
  );
}

export default function App() {
  return (
    <div className="flex h-[2100px] w-[3360px] flex-col overflow-hidden bg-[#03050d] font-['Inter',sans-serif]">
      <MenuBar />
      <TabBar />
      <div className="h-[128px] bg-linear-to-b from-[#414249] via-[#34353e] via-60% to-[#32323c]">
        <Toolbar />
        <BookmarksBar />
      </div>
      <div className="relative">
        <Article />
        <div className="absolute inset-x-0 bottom-0 h-[80px] bg-linear-to-b from-black/0 via-black/4 to-black/8 [mask-image:linear-gradient(to_right,transparent_20px,black_140px,black_3220px,transparent_3340px)]" />
      </div>
      <Dock />
    </div>
  );
}
